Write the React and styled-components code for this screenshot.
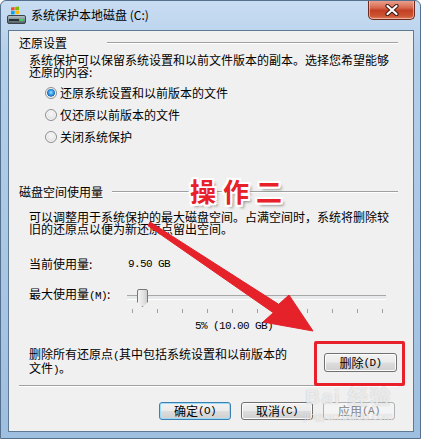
import React from 'react';
import styled, {createGlobalStyle} from 'styled-components';

const Global = createGlobalStyle`
	html, body {
		margin: 0;
		padding: 0;
		background: #ffffff;
	}
	* {
		box-sizing: border-box;
	}
`;

const Window = styled.div`
	position: relative;
	width: 421px;
	height: 439px;
	display: flex;
	flex-direction: column;
	border: 1px solid #55708c;
	border-radius: 6px 6px 0 0;
	background: linear-gradient(180deg, #c9ddf2 0%, #b4cfea 12%, #a9c6e5 60%, #9fbfe0 100%);
	font-family: "Noto Sans CJK SC", "Liberation Sans", sans-serif;
	font-size: 12px;
	color: #000;
	overflow: hidden;
`;

const TitleBar = styled.div`
	height: 29px;
	flex-shrink: 0;
	display: flex;
	align-items: center;
	padding-left: 6px;
	gap: 5px;
`;

const Title = styled.span`
	font-size: 12px;
	line-height: 14px;
	color: #000;
	margin-top: -1px;
`;

const CloseButton = styled.div`
	position: absolute;
	top: -1px;
	left: 367px;
	width: 47px;
	height: 20px;
	border: 1px solid #6b2a20;
	border-top: none;
	border-radius: 0 0 5px 5px;
	background: linear-gradient(180deg, #eaa795 0%, #d86a50 40%, #c33f24 55%, #cd5533 85%, #de8262 100%);
	box-shadow: inset 0 0 0 1px rgba(255, 220, 210, 0.55);
	display: flex;
	align-items: center;
	justify-content: center;
`;

const Client = styled.div`
	flex: 1;
	margin: 0 6px 6px 7px;
	border: 1px solid #5f7a93;
	background: #f0f0f0;
	padding: 0 15px 0 10px;
	display: flex;
	flex-direction: column;
`;

const GroupHeader = styled.div`
	display: flex;
	align-items: center;
	height: 12px;
	line-height: 12px;
	margin-top: ${p => p.$top}px;
	white-space: nowrap;
`;

const HeaderLine = styled.div`
	flex: 1;
	height: 2px;
	margin-left: ${p => p.$gap}px;
	border-top: 1px solid #a0a0a0;
	border-bottom: 1px solid #ffffff;
`;

const Text = styled.div`
	line-height: 12px;
	white-space: nowrap;
	margin-top: ${p => p.$top || 0}px;
	margin-left: ${p => p.$left || 0}px;
`;

const Mono = styled.span`
	font-family: "Liberation Mono", monospace;
	font-size: 11px;
	letter-spacing: -0.6px;
`;

const RadioList = styled.div`
	display: flex;
	flex-direction: column;
	gap: 9px;
	margin-top: 8px;
	margin-left: 26px;
`;

const RadioRow = styled.div`
	display: flex;
	align-items: center;
	gap: 3px;
	height: 13px;
	line-height: 12px;
`;

const RadioDot = styled.span`
	width: 12px;
	height: 12px;
	border-radius: 50%;
	border: 1px solid #8e8f8f;
	background: ${p => p.$on
		? 'radial-gradient(circle at 50% 45%, #9fe0ff 0%, #3aa0e8 30%, #1a66b0 52%, #e8e8e8 60%, #f6f6f6 100%)'
		: 'radial-gradient(circle at 50% 40%, #f8f8f8 0%, #e6e6e6 55%, #d4d4d4 100%)'};
	box-shadow: inset 0 0 0 1px #fafafa;
	flex-shrink: 0;
`;

const ValueRow = styled.div`
	display: flex;
	line-height: 12px;
	margin-top: 23px;
	margin-left: 10px;
	white-space: nowrap;
`;

const ValueLabel = styled.span`
	width: 99px;
`;

const SliderRow = styled.div`
	display: flex;
	align-items: center;
	height: 20px;
	margin-top: 15px;
	margin-left: 10px;
	white-space: nowrap;
	line-height: 12px;
`;

const SliderLabel = styled.span`
	width: 98px;
`;

const Track = styled.div`
	position: relative;
	width: 259px;
	height: 20px;
	&::before {
		content: '';
		position: absolute;
		left: 0;
		right: 0;
		top: 10px;
		height: 3px;
		background: #e7eaea;
		border-top: 1px solid #a7a7a7;
		border-bottom: 1px solid #ffffff;
	}
`;

const Thumb = styled.div`
	position: absolute;
	left: 10px;
	top: 4px;
	width: 11px;
	height: 18px;
	background: linear-gradient(90deg, #f4f4f4 0%, #e2e2e2 60%, #cfcfcf 100%);
	border: 1px solid #777;
	border-radius: 2px 2px 0 0;
	clip-path: polygon(0 0, 100% 0, 100% 72%, 50% 100%, 0 72%);
`;

const Ticks = styled.div`
	display: flex;
	justify-content: space-between;
	width: 251px;
	height: 4px;
	margin-top: 4px;
	margin-left: 113px;
`;

const Tick = styled.span`
	width: 1px;
	height: 4px;
	background: #a0a0a0;
`;

const DeleteRow = styled.div`
	display: flex;
	justify-content: space-between;
	align-items: flex-start;
	margin-top: 16px;
	margin-left: 10px;
	margin-right: 1px;
	height: 24px;
`;

const Separator = styled.div`
	height: 2px;
	margin-top: 13px;
	border-top: 1px solid #a0a0a0;
	border-bottom: 1px solid #ffffff;
`;

const ButtonRow = styled.div`
	display: flex;
	justify-content: flex-end;
	gap: 10px;
	margin-top: 15px;
	margin-right: 3px;
`;

const Button = styled.div`
	width: ${p => p.$w || 72}px;
	height: ${p => p.$h || 18}px;
	margin-top: ${p => p.$top || 0}px;
	display: flex;
	align-items: center;
	justify-content: center;
	line-height: 12px;
	border-radius: 3px;
	border: 1px solid ${p => p.$default ? '#3c7fb1' : p.$disabled ? '#adb2b5' : '#707070'};
	color: ${p => p.$disabled ? '#838383' : '#000'};
	background: ${p => p.$disabled
		? '#f4f4f4'
		: 'linear-gradient(180deg, #f2f2f2 0%, #ebebeb 48%, #dddddd 52%, #cfcfcf 100%)'};
	box-shadow: inset 0 0 0 1px ${p => p.$default ? '#9cdcf8' : p.$disabled ? '#f4f4f4' : '#fcfcfc'};
	white-space: nowrap;
`;

const RedBox = styled.div`
	position: absolute;
	left: 313px;
	top: 340px;
	width: 91px;
	height: 45px;
	border: 3px solid #e8202a;
	border-radius: 2px;
	pointer-events: none;
`;

const Caption = styled.div`
	position: absolute;
	left: 189px;
	top: 174px;
	font-family: "Noto Sans CJK SC", sans-serif;
	font-weight: 700;
	font-size: 26px;
	line-height: 32px;
	letter-spacing: 7px;
	color: #e8202a;
	text-shadow:
		-2px 0 0 #fff, 2px 0 0 #fff, 0 -2px 0 #fff, 0 2px 0 #fff,
		-2px -2px 0 #fff, 2px 2px 0 #fff, -2px 2px 0 #fff, 2px -2px 0 #fff,
		3px 3px 3px rgba(0, 0, 0, 0.45);
	white-space: nowrap;
`;

const Overlay = styled.svg`
	position: absolute;
	left: 0;
	top: 0;
	pointer-events: none;
`;

const Watermark = styled.div`
	position: absolute;
	left: 303px;
	top: 384px;
	display: flex;
	flex-direction: column;
	align-items: center;
	color: rgba(255, 255, 255, 0.7);
	text-shadow: 0 0 1px rgba(80, 80, 80, 0.35);
	pointer-events: none;
`;

const MarkBig = styled.span`
	font-family: "Liberation Sans", "Noto Sans CJK SC", sans-serif;
	font-weight: 700;
	font-size: 21px;
	line-height: 24px;
	letter-spacing: 1px;
`;

const MarkSmall = styled.span`
	font-family: "Liberation Sans", sans-serif;
	font-size: 11px;
	line-height: 14px;
`;

function DriveIcon()
{
	return <svg width="19" height="19" viewBox="0 0 19 19">
		<defs>
			<linearGradient id="drv" x1="0" y1="0" x2="0" y2="1">
				<stop offset="0" stopColor="#b9c6cc"/>
				<stop offset="1" stopColor="#4d5a60"/>
			</linearGradient>
		</defs>
		<rect x="0.5" y="9.5" width="18" height="8" rx="1.5" fill="url(#drv)" stroke="#3a4449"/>
		<rect x="2" y="13" width="10" height="2" fill="#2a3236"/>
		<rect x="13" y="13" width="3" height="2" fill="#3fd25a"/>
		<path d="M4 1.5 L7.6 1 L7.6 4.3 L4 4.6 Z" fill="#f25022"/>
		<path d="M8.2 0.9 L12 0.4 L12 3.9 L8.2 4.2 Z" fill="#7fba00"/>
		<path d="M4 5.2 L7.6 4.9 L7.6 8.2 L4 8.4 Z" fill="#00a4ef"/>
		<path d="M8.2 4.8 L12 4.5 L12 7.9 L8.2 8.1 Z" fill="#ffb900"/>
	</svg>;
}

function CloseGlyph()
{
	return <svg width="14" height="12" viewBox="0 0 14 12">
		<path d="M2.5 2 L11.5 10 M11.5 2 L2.5 10" stroke="#3d1a14" strokeWidth="4.2" strokeLinecap="round"/>
		<path d="M2.5 2 L11.5 10 M11.5 2 L2.5 10" stroke="#ffffff" strokeWidth="2.2" strokeLinecap="round"/>
	</svg>;
}

function Radio({on, children})
{
	return <RadioRow>
		<RadioDot $on={on}/>
		<span>{children}</span>
	</RadioRow>;
}

const tickCount = 11;

function App()
{
	return <>
		<Global/>
		<Window>
			<TitleBar>
				<DriveIcon/>
				<Title>系统保护本地磁盘 (C:)</Title>
			</TitleBar>
			<CloseButton><CloseGlyph/></CloseButton>

			<Client>
				<GroupHeader $top={6}>
					还原设置
					<HeaderLine $gap={40}/>
				</GroupHeader>
				<Text $top={5} $left={10}>
					系统保护可以保留系统设置和以前文件版本的副本。选择您希望能够<br/>
					还原的内容:
				</Text>
				<RadioList>
					<Radio on>还原系统设置和以前版本的文件</Radio>
					<Radio>仅还原以前版本的文件</Radio>
					<Radio>关闭系统保护</Radio>
				</RadioList>

				<GroupHeader $top={43}>
					磁盘空间使用量
					<HeaderLine $gap={9}/>
				</GroupHeader>
				<Text $top={13} $left={10}>
					可以调整用于系统保护的最大磁盘空间。占满空间时，系统将删除较<br/>
					旧的还原点以便为新还原点留出空间。
				</Text>
				<ValueRow>
					<ValueLabel>当前使用量:</ValueLabel>
					<Mono>9.50 GB</Mono>
				</ValueRow>
				<SliderRow>
					<SliderLabel>最大使用量<Mono>(M)</Mono>:</SliderLabel>
					<Track>
						<Thumb/>
					</Track>
				</SliderRow>
				<Ticks>
					{Array.from({length: tickCount}, (_, i) => <Tick key={i}/>)}
				</Ticks>
				<Text $top={5} $left={176}><Mono>5% (10.00 GB)</Mono></Text>

				<DeleteRow>
					<Text>
						删除所有还原点<Mono>(</Mono>其中包括系统设置和以前版本的<br/>
						文件<Mono>)</Mono>。
					</Text>
					<Button $w={73} $h={19} $top={5}>删除<Mono>(D)</Mono></Button>
				</DeleteRow>

				<Separator/>

				<ButtonRow>
					<Button $default>确定<Mono>(O)</Mono></Button>
					<Button>取消<Mono>(C)</Mono></Button>
					<Button $disabled>应用<Mono>(A)</Mono></Button>
				</ButtonRow>
			</Client>

			<Overlay width="421" height="439" viewBox="0 0 421 439">
				<polygon
					points="149,221 277.7,303.3 288,294 312,330 262,321 272.3,311.7 147,224.7"
					fill="#e5212a"
					stroke="#e5212a"
					strokeWidth="1"
					strokeLinejoin="round"
				/>
			</Overlay>
			<Caption>操作二</Caption>
			<RedBox/>
			<Watermark>
				<MarkBig>Bai 经验</MarkBig>
				<MarkSmall>jingyan.baidu.com</MarkSmall>
			</Watermark>
		</Window>
	</>;
}

export default App;
